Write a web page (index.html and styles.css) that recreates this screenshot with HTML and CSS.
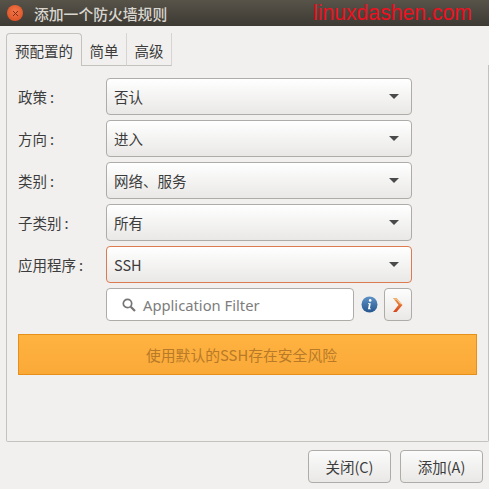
FILE: index.html
```html
<!DOCTYPE html>
<html>
<head>
<meta charset="utf-8">
<title>添加一个防火墙规则</title>
<link rel="stylesheet" href="styles.css">
</head>
<body>

<header class="titlebar">
	<div class="close-btn">
		<svg width="7" height="7" viewBox="0 0 7 7"><path d="M1 1L6 6M6 1L1 6" stroke="#7a2c14" stroke-width="1" fill="none"/></svg>
	</div>
	<div class="title">添加一个防火墙规则</div>
	<div class="watermark">linuxdashen.com</div>
</header>

<div class="tabs">
	<div class="tab active">预配置的</div>
	<div class="tab">简单</div>
	<div class="tab">高级</div>
</div>

<div class="panel">
	<div class="row">
		<div class="label">政策<span class="colon">:</span></div>
		<div class="combo"><span>否认</span><i class="caret"></i></div>
	</div>
	<div class="row">
		<div class="label">方向<span class="colon">:</span></div>
		<div class="combo"><span>进入</span><i class="caret"></i></div>
	</div>
	<div class="row">
		<div class="label">类别<span class="colon">:</span></div>
		<div class="combo"><span>网络、服务</span><i class="caret"></i></div>
	</div>
	<div class="row">
		<div class="label">子类别<span class="colon">:</span></div>
		<div class="combo"><span>所有</span><i class="caret"></i></div>
	</div>
	<div class="row">
		<div class="label">应用程序<span class="colon">:</span></div>
		<div class="combo focus"><span>SSH</span><i class="caret"></i></div>
	</div>
	<div class="filter-row">
		<div class="filter">
			<svg width="16" height="16" viewBox="0 0 16 16"><circle cx="6.5" cy="6.5" r="4.2" stroke="#757575" stroke-width="1.7" fill="none"/><path d="M9.7 9.7L14 14" stroke="#757575" stroke-width="2.2" fill="none"/></svg>
			<span>Application Filter</span>
		</div>
		<svg class="info" width="17" height="17" viewBox="0 0 17 17">
			<defs><linearGradient id="ig" x1="0" y1="0" x2="0" y2="1"><stop offset="0" stop-color="#5f93c6"/><stop offset="1" stop-color="#26568f"/></linearGradient></defs>
			<circle cx="8.5" cy="8.5" r="8" fill="url(#ig)"/>
			<circle cx="9.2" cy="4.4" r="1.3" fill="#fff"/>
			<path d="M7 7.2H9.8L8.9 12.4H10V13.2H7L7.9 8H7Z" fill="#fff"/>
		</svg>
		<div class="go-btn">
			<svg width="12" height="16" viewBox="0 0 12 16">
				<defs><linearGradient id="ag" x1="0" y1="0" x2="0" y2="1"><stop offset="0" stop-color="#eb9a4c"/><stop offset="1" stop-color="#d8431a"/></linearGradient></defs>
				<path d="M1 1H4.5L10.5 8L4.5 15H1L6.5 8Z" fill="url(#ag)"/>
				<path d="M2.2 2L4.5 2L9 7.4" stroke="#f7d09a" stroke-width="1" fill="none"/>
			</svg>
		</div>
	</div>
	<div class="warning">使用默认的SSH存在安全风险</div>
</div>

<div class="actions">
	<div class="btn">关闭(C)</div>
	<div class="btn">添加(A)</div>
</div>

</body>
</html>
```

FILE: styles.css
```css
* {
	margin: 0;
	padding: 0;
	box-sizing: border-box;
}
html, body {
	width: 489px;
	height: 489px;
	overflow: hidden;
}
body {
	background: #f1f0ee;
	color: #3c3c3c;
	font-family: "Noto Sans CJK SC", "Noto Sans", sans-serif;
	font-size: 14.5px;
}
.titlebar {
	display: flex;
	align-items: center;
	height: 26px;
	padding-left: 7px;
	background: linear-gradient(#575349, #3d3a34);
}
.close-btn {
	display: flex;
	align-items: center;
	justify-content: center;
	width: 16px;
	height: 16px;
	border-radius: 50%;
	background: radial-gradient(circle at 50% 40%, #f2784a, #d7481c);
}
.title {
	margin-left: 11px;
	color: #d9d6cf;
	font-size: 14.8px;
	font-weight: 500;
}
.watermark {
	margin-left: auto;
	margin-right: 17px;
	color: #ee1020;
	font-family: "Liberation Sans", sans-serif;
	font-size: 21.2px;
}
.tabs {
	display: flex;
	height: 33px;
	margin-top: 7px;
	padding-left: 6px;
	margin-bottom: -1px;
}
.tab {
	display: flex;
	align-items: center;
	justify-content: center;
	width: 45px;
	padding-top: 3px;
	border-right: 1px solid #d6d4d0;
	border-bottom: 1px solid #c4c2be;
}
.tab.active {
	width: 76px;
	padding-top: 0;
	background: #f1f0ee;
	border: 1px solid #c4c2be;
	border-bottom: 0;
	border-radius: 4px 4px 0 0;
}
.panel {
	width: 483px;
	height: 377px;
	margin-left: 6px;
	padding: 13px 0 0 11px;
	border: 1px solid #c4c2be;
	border-top: 0;
	border-radius: 0 0 2px 2px;
}
.row {
	display: flex;
	align-items: center;
	height: 37px;
	margin-bottom: 5px;
}
.label {
	width: 88px;
}
.colon {
	margin-left: 3px;
}
.combo {
	display: flex;
	align-items: center;
	justify-content: space-between;
	width: 306px;
	height: 37px;
	padding: 0 12px 0 7px;
	background: linear-gradient(#ffffff, #e9e8e6);
	border: 1px solid #aeaca8;
	border-radius: 4px;
}
.combo.focus {
	border-color: #dd7a50;
}
.caret {
	width: 0;
	height: 0;
	border-left: 5px solid transparent;
	border-right: 5px solid transparent;
	border-top: 5px solid #4a4a4a;
}
.filter-row {
	display: flex;
	align-items: center;
	height: 33px;
	margin-left: 88px;
}
.filter {
	display: flex;
	align-items: center;
	width: 248px;
	height: 33px;
	padding-left: 14px;
	gap: 6px;
	background: #fff;
	border: 1px solid #aeaca8;
	border-radius: 4px;
	color: #7d7d7d;
	font-family: "Noto Sans", sans-serif;
	font-size: 14.75px;
}
.info {
	margin-left: 7px;
}
.go-btn {
	display: flex;
	align-items: center;
	justify-content: center;
	width: 28px;
	height: 33px;
	margin-left: 6px;
	background: linear-gradient(#fdfdfd, #e9e8e6);
	border: 1px solid #aeaca8;
	border-radius: 4px;
}
.warning {
	display: flex;
	align-items: center;
	justify-content: center;
	width: 459px;
	height: 41px;
	margin-top: 13px;
	padding-right: 12px;
	background: linear-gradient(#ffb341, #faa937);
	border: 1px solid #e6901a;
	color: #b87a28;
	font-size: 14.8px;
}
.actions {
	display: flex;
	justify-content: flex-end;
	gap: 9px;
	padding: 8px 6px 0 0;
}
.btn {
	display: flex;
	align-items: center;
	justify-content: center;
	width: 83px;
	height: 33px;
	background: linear-gradient(#fbfbfb, #e9e8e6);
	border: 1px solid #aeaca8;
	border-radius: 4px;
}
```
